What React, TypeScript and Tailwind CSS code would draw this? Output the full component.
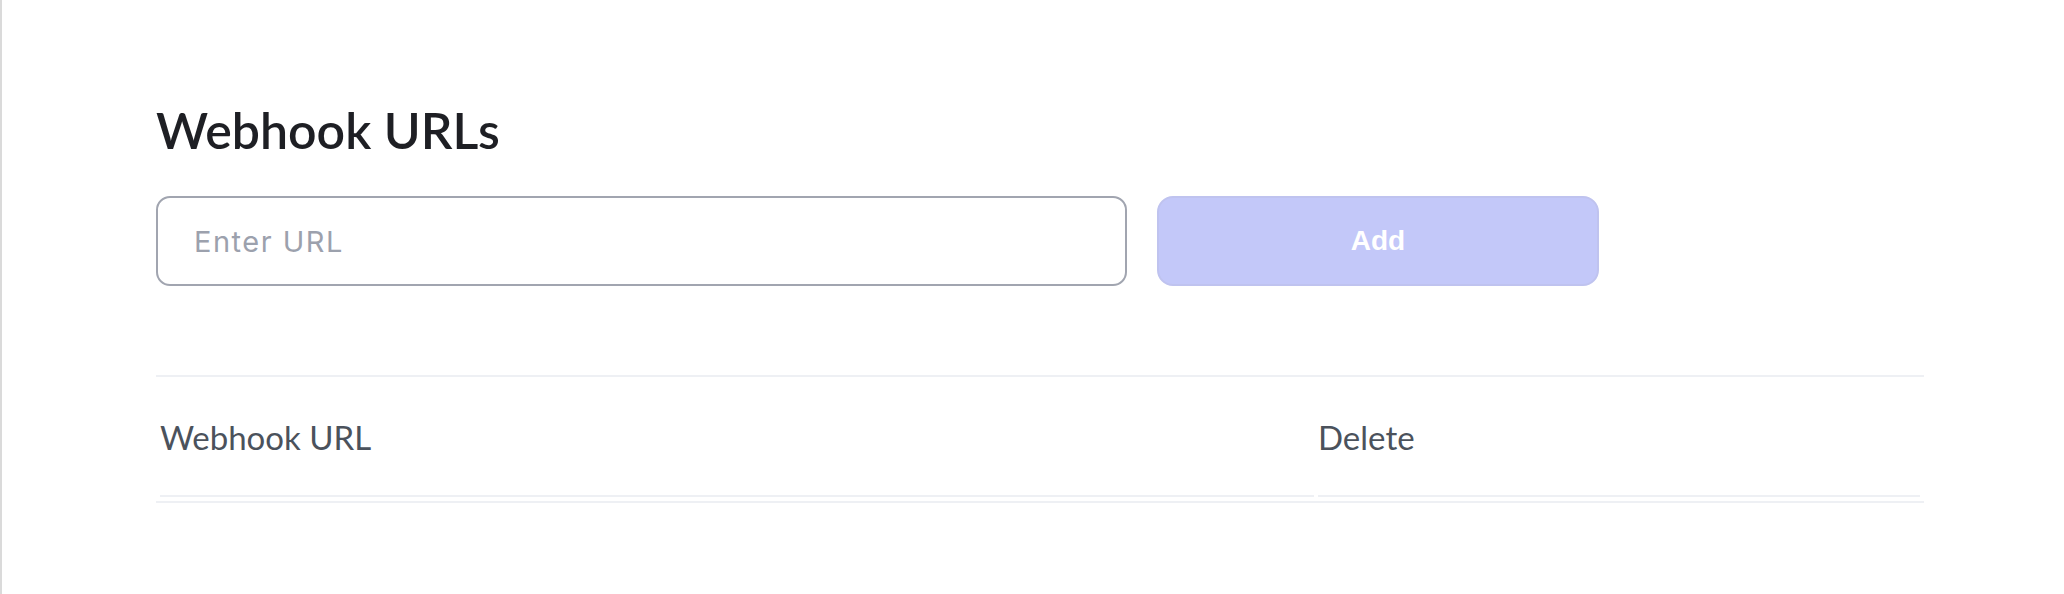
import React, { useState } from 'react';

const App: React.FC = () => {
  const [url, setUrl] = useState('');
  const [hooks, setHooks] = useState<string[]>([]);

  const addHook = () => {
    if (!url.trim()) return;
    setHooks([...hooks, url.trim()]);
    setUrl('');
  };

  return (
    <div className="min-h-screen bg-white border-l-2 border-[#dadada] pl-[154px] pr-[140px] pt-[100px]">
      <h1 className="text-[50px] leading-[60px] font-semibold text-[#1e1f24] [font-family:Lato,'Noto_Sans',sans-serif]">
        Webhook URLs
      </h1>

      <div className="mt-[36px] flex gap-[30px]">
        <input
          value={url}
          onChange={(e) => setUrl(e.target.value)}
          placeholder="Enter URL"
          className="w-[971px] h-[90px] rounded-[14px] border-2 border-[#a1a5b0] px-[36px] text-[29px] tracking-[1.5px] text-[#1f2937] placeholder:text-[#9ca1ad] outline-none [font-family:Inter,sans-serif]"
        />
        <button
          onClick={addHook}
          disabled={!url.trim()}
          className="w-[442px] h-[90px] rounded-[16px] border-2 border-[#bfc3ef] bg-[#c3c8f9] text-white text-[28px] font-bold [font-family:'Liberation_Sans',Arial,sans-serif]"
        >
          Add
        </button>
      </div>

      <div className="mt-[89px] border-t-2 border-b-2 border-[#eef0f4]">
        <table className="w-full border-separate border-spacing-[4px] [font-family:Lato,'Noto_Sans',sans-serif]">
          <thead>
            <tr>
              <th className="w-[1154px] h-[116px] border-b-2 border-[#eef0f4] text-left font-normal text-[33px] text-[#4b525c]">
                Webhook URL
              </th>
              <th className="h-[116px] border-b-2 border-[#eef0f4] text-left font-normal text-[33px] text-[#4b525c]">
                Delete
              </th>
            </tr>
          </thead>
          <tbody>
            {hooks.map((h) => (
              <tr key={h}>
                <td className="py-6 text-[28px] text-[#4b525c]">{h}</td>
                <td className="py-6">
                  <button
                    onClick={() => setHooks(hooks.filter((x) => x !== h))}
                    className="text-[28px] text-red-500"
                  >
                    Delete
                  </button>
                </td>
              </tr>
            ))}
          </tbody>
        </table>
      </div>
    </div>
  );
};

export default App;
